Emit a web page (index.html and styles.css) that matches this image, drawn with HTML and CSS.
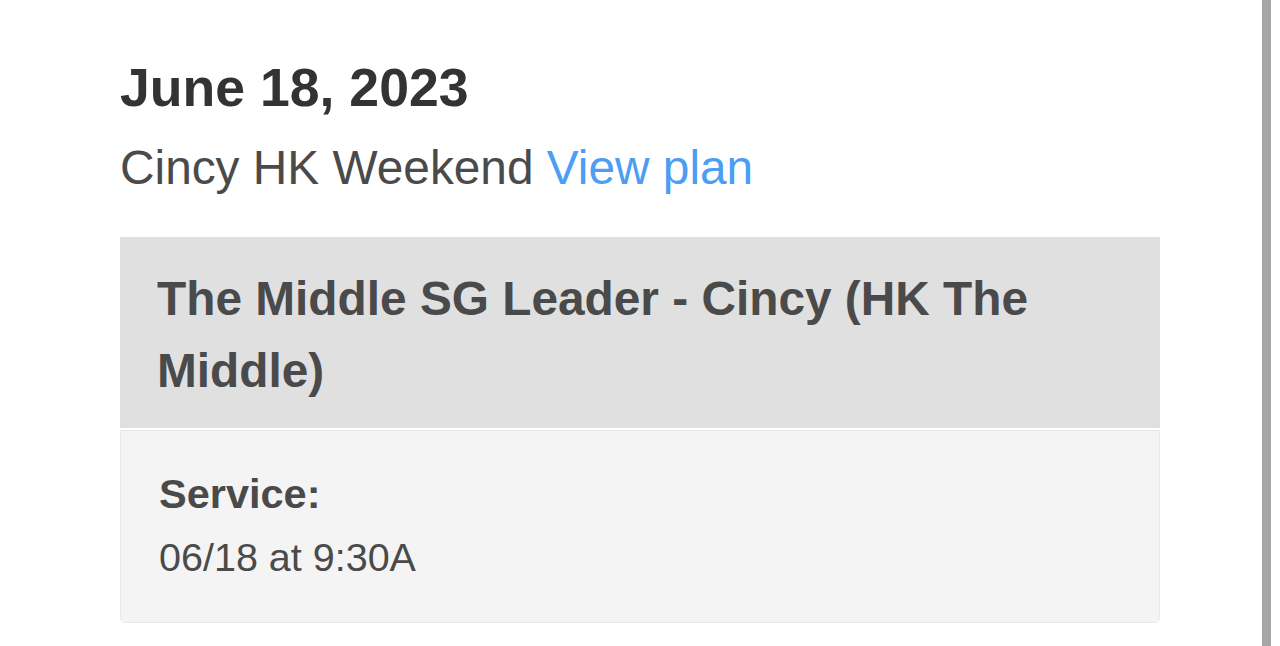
FILE: index.html
```html
<!DOCTYPE html>
<html lang="en">
<head>
<meta charset="utf-8">
<title>June 18, 2023</title>
<link rel="stylesheet" href="styles.css">
</head>
<body>
<main class="page">
  <h1 class="date">June 18, 2023</h1>
  <p class="plan">Cincy HK Weekend <a class="plan-link" href="#">View plan</a></p>
  <section class="card">
    <h2 class="card-head">The Middle SG Leader - Cincy (HK The Middle)</h2>
    <div class="card-body">
      <div class="label">Service:</div>
      <div class="value">06/18 at 9:30A</div>
    </div>
  </section>
</main>
<div class="scroll-thumb"></div>
</body>
</html>
```

FILE: styles.css
```css
html, body {
  margin: 0;
  padding: 0;
  background: #ffffff;
}

body {
  font-family: "Liberation Sans", Arial, Helvetica, sans-serif;
  color: #4a4a4a;
  overflow: hidden;
}

.page {
  width: 1040px;
  padding: 55px 0 0 120px;
}

.date {
  margin: 0;
  font-size: 53.6px;
  line-height: 1.2;
  font-weight: bold;
  color: #333333;
}

.plan {
  margin: 20px 0 0;
  font-size: 47.8px;
  line-height: 1.2;
  color: #4a4a4a;
}

.plan-link {
  color: #4c9ef3;
  text-decoration: none;
}

.card {
  margin-top: 40px;
}

.card-head {
  margin: 0;
  background: #e0e0e0;
  padding: 26px 36px 21px 37px;
  font-size: 47.8px;
  line-height: 72px;
  font-weight: bold;
  color: #4a4a4a;
}

.card-body {
  margin-top: 2px;
  background: #f4f4f4;
  border: 1px solid #e9e9e9;
  border-radius: 0 0 5px 5px;
  padding: 38px 38px 40px 38px;
}

.label {
  font-size: 41.5px;
  line-height: 1.2;
  font-weight: bold;
  color: #4a4a4a;
}

.value {
  margin-top: 16px;
  font-size: 39.5px;
  line-height: 1.2;
  color: #4a4a4a;
}

.scroll-thumb {
  position: fixed;
  top: 0;
  bottom: 0;
  left: 1262px;
  width: 9px;
  background: #a6a6a6;
}
```
